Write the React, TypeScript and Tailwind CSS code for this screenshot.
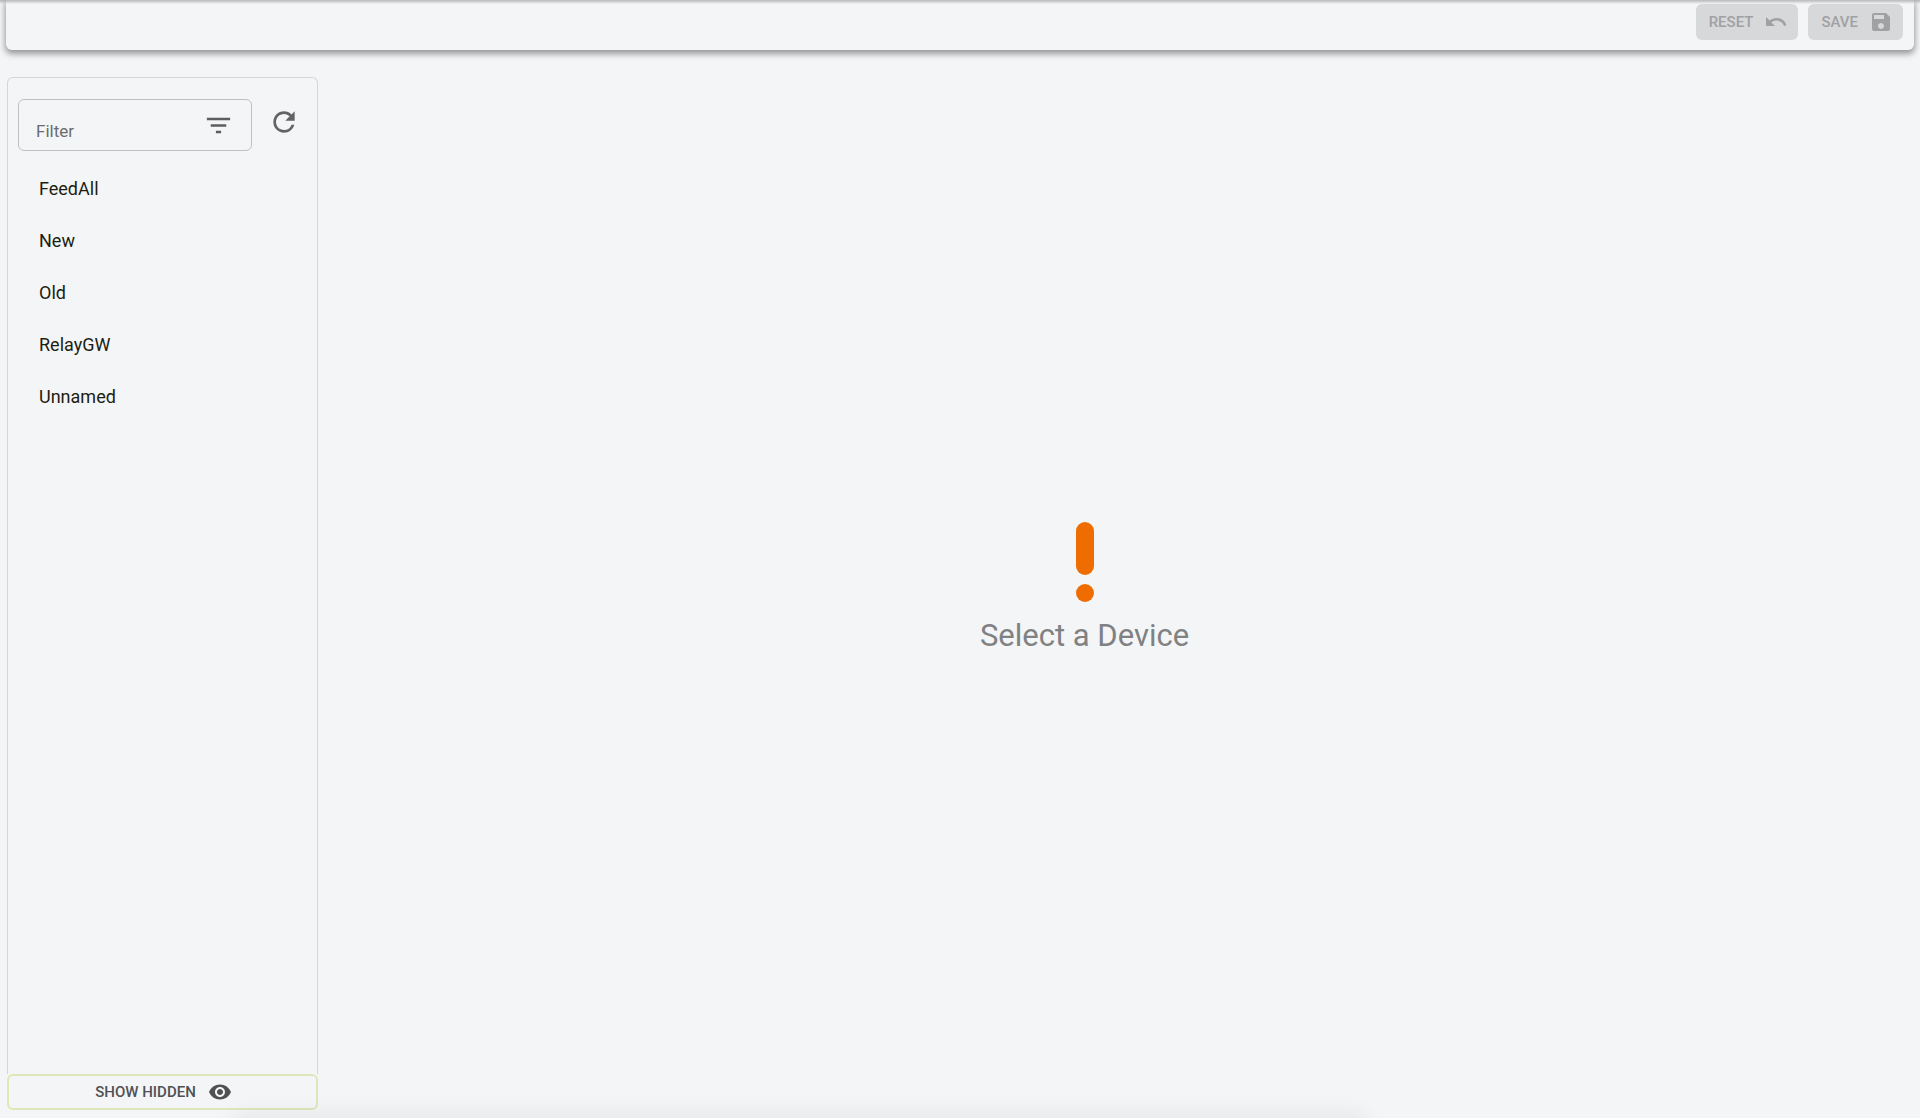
import { useState } from "react";
import {
  MdFilterList,
  MdRefresh,
  MdSave,
  MdUndo,
  MdVisibility
} from "react-icons/md";

const DEVICES = ["FeedAll", "New", "Old", "RelayGW", "Unnamed"];

const ACTION =
  "flex h-9 items-center gap-[11px] rounded-md bg-[#d7d8da] pl-[13px] pr-[10px] text-[15px] font-medium uppercase text-[#a0a1a3]";

function ActionBar() {
  return (
    <header className="mx-[6px] flex h-[50px] items-start justify-end gap-[10px] rounded-b-md px-[11px] pt-1 shadow-[0_3px_6px_1px_rgba(0,0,0,0.38)]">
      <button type="button" disabled className={ACTION}>
        Reset
        <MdUndo size={24} />
      </button>
      <button type="button" disabled className={ACTION}>
        Save
        <MdSave size={24} />
      </button>
    </header>
  );
}

function DeviceList() {
  const [filter, setFilter] = useState("");
  const items = DEVICES.filter(name =>
    name.toLowerCase().includes(filter.toLowerCase())
  );

  return (
    <aside className="flex w-[311px] shrink-0 flex-col">
      <div className="flex-1 rounded-t-md border border-b-0 border-[#d3d5d8] px-[10px] pt-[21px]">
        <div className="flex items-center">
          <label className="flex h-[52px] w-[234px] items-center rounded-md border border-[#bfc0c3] px-[17px]">
            <input
              type="text"
              aria-label="Filter"
              placeholder="Filter"
              value={filter}
              onChange={e => setFilter(e.target.value)}
              className="w-full min-w-0 flex-1 bg-transparent pt-3 text-[17px] leading-6 text-[#222] outline-none placeholder:text-[#6b6c6e]"
            />
            <MdFilterList size={31} className="shrink-0 text-[#5c5d5f]" />
          </label>
          <button
            type="button"
            aria-label="Refresh"
            className="mb-[6px] ml-4 text-[#626365]"
          >
            <MdRefresh size={32} />
          </button>
        </div>
        <ul className="mt-3">
          {items.map(name =>
            <li key={name}>
              <button
                type="button"
                className="flex h-[52px] w-full items-center px-[21px] text-left text-lg text-[#1c1e10]"
              >
                {name}
              </button>
            </li>
          )}
        </ul>
      </div>
      <button
        type="button"
        className="flex h-9 items-center justify-center gap-3 rounded-md border-2 border-[#dfe7b8] pl-[2px] text-[15px] font-medium uppercase text-[#505153]"
      >
        Show hidden
        <MdVisibility size={24} />
      </button>
    </aside>
  );
}

function EmptyState() {
  return (
    <main className="flex flex-1 flex-col items-center justify-center pr-[62px] pb-[10px]">
      <svg width="18" height="80" viewBox="0 0 18 80" fill="#ef6c00">
        <rect width="18" height="53" rx="9" />
        <circle cx="9" cy="71" r="9" />
      </svg>
      <p className="mt-[14px] text-[31px] leading-10 text-[#808183]">
        Select a Device
      </p>
    </main>
  );
}

export default function App() {
  return (
    <div className="relative flex min-h-screen flex-col overflow-hidden bg-[#f4f5f7] font-[Roboto,sans-serif]">
      <div className="absolute inset-x-0 top-0 h-1 bg-linear-to-b from-black/25 to-transparent" />
      <ActionBar />
      <div className="flex flex-1 px-[7px] pt-[27px] pb-2">
        <DeviceList />
        <EmptyState />
      </div>
      <div className="pointer-events-none absolute -bottom-2 left-1/8 right-7/24 h-2 shadow-[0_0_20px_6px_rgba(0,0,0,0.06)]" />
    </div>
  );
}
